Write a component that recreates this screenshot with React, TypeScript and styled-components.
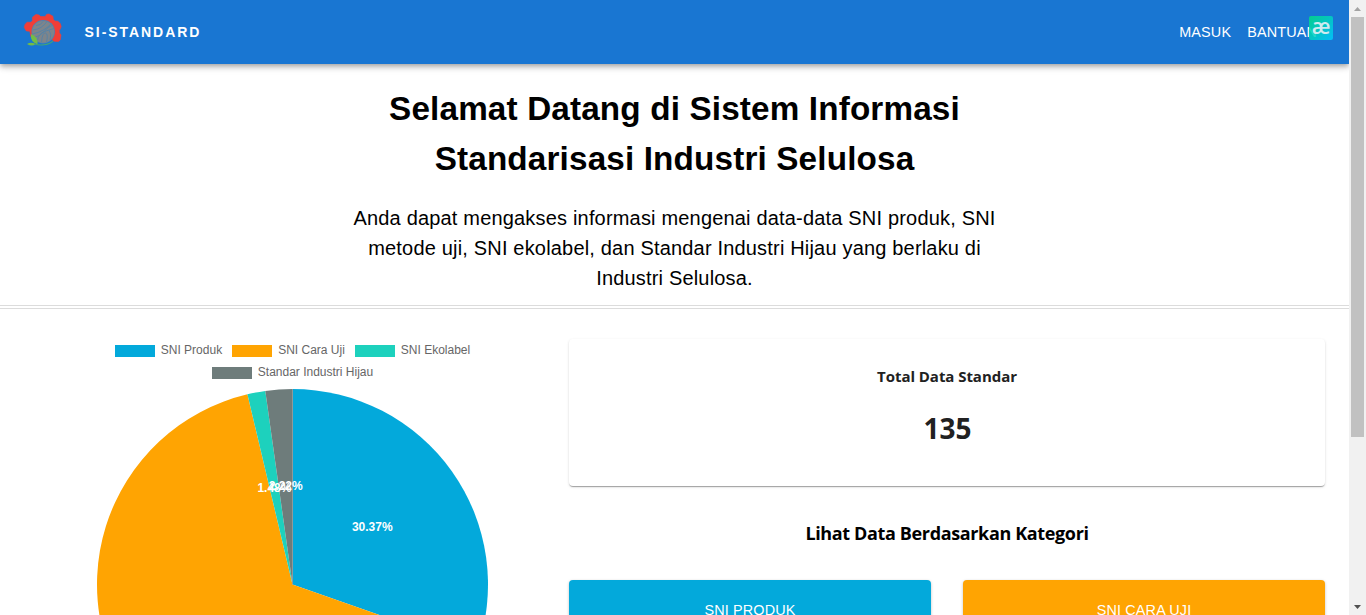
import React from "react";
import styled, { createGlobalStyle } from "styled-components";

const GlobalStyle = createGlobalStyle`
  * { box-sizing: border-box; }
  body { margin: 0; background: #fff; overflow: hidden; }
`;

const sans = `"Liberation Sans", Arial, sans-serif`;
const humanist = `"Open Sans", "Noto Sans", sans-serif`;

const Window = styled.div`
  display: flex;
  width: 1366px;
  height: 615px;
  overflow: hidden;
  font-family: ${sans};
`;

const Page = styled.div`
  width: 1349px;
  height: 615px;
  overflow: hidden;
`;

const AppBar = styled.header`
  position: relative;
  display: flex;
  align-items: center;
  height: 64px;
  padding: 0 32px 0 24px;
  background: #1976d2;
  color: #fff;
  box-shadow: 0 2px 4px -1px rgba(0, 0, 0, 0.2), 0 4px 5px 0 rgba(0, 0, 0, 0.14),
    0 1px 10px 0 rgba(0, 0, 0, 0.12);
`;

const Logo = styled.svg`
  width: 40px;
  height: 36px;
  margin: 0 21.5px 4px -1px;
`;

const Brand = styled.span`
  flex: 1;
  font-size: 14px;
  font-weight: 700;
  letter-spacing: 1.95px;
`;

const NavLink = styled.a`
  margin-left: 16px;
  font-size: 14.4px;
  line-height: 20px;
  letter-spacing: 0.15px;
`;

const Extension = styled.div`
  position: absolute;
  top: 16px;
  right: 16px;
  width: 24px;
  height: 24px;
  border-radius: 2px;
  background: linear-gradient(135deg, rgba(0, 220, 130, 0.86), rgba(0, 200, 255, 0.86));
  color: #cdebf0;
  font: 600 21px/21px ${humanist};
  text-align: center;
`;

const Hero = styled.section`
  display: flex;
  flex-direction: column;
  align-items: center;
  height: 242px;
  padding-top: 20px;
  border-bottom: 1px solid #dcdcdc;
  text-align: center;
`;

const Title = styled.h1`
  width: 660px;
  margin: 0;
  font-size: 33.28px;
  font-weight: 700;
  line-height: 50px;
  letter-spacing: 0.15px;
`;

const Intro = styled.p`
  width: 660px;
  margin: 19px 0 0;
  font-size: 20px;
  line-height: 30px;
  letter-spacing: 0.18px;
`;

const Divider = styled.hr`
  height: 1px;
  margin: 2px 0 0;
  border: 0;
  background: #dcdcdc;
`;

const Content = styled.main`
  display: grid;
  grid-template-columns: 489px 756px;
  column-gap: 32px;
  padding: 30px 24px 0 48px;
`;

const ChartPanel = styled.div`
  display: flex;
  flex-direction: column;
  align-items: center;
`;

const Legend = styled.div`
  display: flex;
  flex-wrap: wrap;
  align-content: flex-start;
  justify-content: center;
  column-gap: 10px;
  width: 391px;
  height: 49px;
`;

const LegendItem = styled.div`
  display: flex;
  align-items: center;
  gap: 6px;
  height: 22px;
  font-size: 12px;
  color: #666;
`;

const Swatch = styled.span<{ $color: string }>`
  width: 40px;
  height: 12px;
  margin-top: 2px;
  background: ${(p) => p.$color};
`;

const Pie = styled.svg`
  display: block;
  width: 392px;
  height: 392px;
  margin-right: 1px;
  flex: none;
  overflow: visible;
`;

const PieLabel = styled.text`
  fill: #fff;
  font: 700 12px ${sans};
  text-anchor: middle;
`;

const Side = styled.div`
  display: flex;
  flex-direction: column;
`;

const Card = styled.section`
  height: 147px;
  border-radius: 4px;
  background: #fff;
  color: #212121;
  text-align: center;
  font-family: ${humanist};
  box-shadow: 0 2px 1px -1px rgba(0, 0, 0, 0.2), 0 1px 1px 0 rgba(0, 0, 0, 0.14),
    0 1px 3px 0 rgba(0, 0, 0, 0.12);
`;

const CardTitle = styled.h2`
  margin: 0;
  padding-top: 25px;
  font-size: 15px;
  font-weight: 700;
  line-height: 24px;
  letter-spacing: -0.05px;
`;

const Total = styled.p`
  margin: 20px 0 0 1px;
  font-size: 28px;
  font-weight: 700;
  line-height: 40px;
`;

const SectionTitle = styled.h2`
  margin: 33px 0 32px;
  font: 700 18px/29px ${humanist};
  letter-spacing: -0.36px;
  text-align: center;
`;

const Categories = styled.div`
  display: grid;
  grid-template-columns: 1fr 1fr;
  gap: 32px;
`;

const Category = styled.div<{ $color: string }>`
  height: 100px;
  padding-top: 20px;
  border-radius: 4px;
  background: ${(p) => p.$color};
  color: #fff;
  font-size: 14.4px;
  line-height: 20px;
  letter-spacing: 0.15px;
  text-align: center;
  box-shadow: 0 1px 3px rgba(0, 0, 0, 0.25);
`;

const Scrollbar = styled.div`
  display: flex;
  flex-direction: column;
  align-items: center;
  justify-content: space-between;
  width: 17px;
  height: 615px;
  background: #f1f1f1;
`;

const ScrollArrow = styled.svg`
  width: 17px;
  height: 17px;
  flex: none;
`;

const Thumb = styled.div`
  width: 13px;
  height: 420px;
  margin-bottom: auto;
  background: #c1c1c1;
`;

const data = [
  { label: "SNI Produk", count: 41, color: "#03a9db" },
  { label: "SNI Cara Uji", count: 89, color: "#ffa402" },
  { label: "SNI Ekolabel", count: 2, color: "#1dd1bd" },
  { label: "Standar Industri Hijau", count: 3, color: "#6e7c7b" },
];
const total = data.reduce((n, d) => n + d.count, 0);
const C = 196.5;
const R = 195.5;

function point(fraction: number, radius: number) {
  const a = fraction * Math.PI * 2;
  return [C + radius * Math.sin(a), C - radius * Math.cos(a)];
}

function PieChart() {
  let start = 0;
  const slices = data.map((d) => {
    const end = start + d.count / total;
    const [x1, y1] = point(start, R);
    const [x2, y2] = point(end, R);
    const [tx, ty] = point((start + end) / 2, R / 2);
    const large = end - start > 0.5 ? 1 : 0;
    start = end;
    return { ...d, tx, ty, path: `M${C} ${C}L${x1} ${y1}A${R} ${R} 0 ${large} 1 ${x2} ${y2}Z` };
  });
  return (
    <Pie viewBox="0 0 392 392">
      {slices.map((s) => (
        <path key={s.label} d={s.path} fill={s.color} />
      ))}
      <path d={`M${C} ${C}V1`} stroke="#8f9a9a" strokeWidth="1" />
      {slices.map((s) => (
        <PieLabel key={s.label} x={s.tx} y={s.ty + 3.2}>
          {((s.count / total) * 100).toFixed(2)}%
        </PieLabel>
      ))}
    </Pie>
  );
}

function BrandLogo() {
  return (
    <Logo viewBox="0 0 40 36">
      <path
        fill="#f03e37"
        stroke="#f03e37"
        strokeWidth="0.6"
        strokeLinejoin="round"
        d="M1.2 15.3 2 12.5 4 10.2 8 10.3 9.4 8.8 9.4 5.2 13 2.4 16 3 17.7 4.6h4.5L23.5 2.4 26 2l3.9 2.2L30.3 7.3 31.8 9 35 9.2 37.2 11.5 38.2 14.5 37.2 17 36.2 18.6 36.4 20.8 38 23 37.2 28 35.5 29.6 31 29.2 20 19.5 8 25 6.8 19.3 3.2 18.9z"
      />
      <circle cx="20.2" cy="19.8" r="11.7" fill="#4f84b0" />
      <circle cx="20.2" cy="19.8" r="10.9" fill="#7e858b" />
      <g fill="none" stroke="#5382a8" strokeWidth="0.9">
        <path d="M10 18q9-1 14-8.500M9.600 22q13-3 19-11M11 25.500q6-1 10-6t9-6.500M14.500 28.500q1-7 7-9t9.500-3M18.500 30q1-10 4-9 3 1 1 9M27 28q2-6-1-10M13 13.500q5 0 7-4" />
      </g>
      <path fill="#73bd45" d="M8 22q7.5 3 6.5 10.2Q7 30 8 22zM4 32q4-2.5 8.5 0Q9 35 4 32z" />
      <path d="M12 32.3q4 1 9 .5 6-.6 9-4" fill="none" stroke="#43a477" strokeWidth="1.1" />
    </Logo>
  );
}

export default function App() {
  return (
    <Window>
      <GlobalStyle />
      <Page>
        <AppBar>
          <BrandLogo />
          <Brand>SI-STANDARD</Brand>
          <NavLink>MASUK</NavLink>
          <NavLink>BANTUAN</NavLink>
          <Extension>æ</Extension>
        </AppBar>
        <Hero>
          <Title>
            Selamat Datang di Sistem Informasi
            <br />
            Standarisasi Industri Selulosa
          </Title>
          <Intro>
            Anda dapat mengakses informasi mengenai data-data SNI produk, SNI
            <br />
            metode uji, SNI ekolabel, dan Standar Industri Hijau yang berlaku di
            <br />
            Industri Selulosa.
          </Intro>
        </Hero>
        <Divider />
        <Content>
          <ChartPanel>
            <Legend>
              {data.map((d) => (
                <LegendItem key={d.label}>
                  <Swatch $color={d.color} />
                  {d.label}
                </LegendItem>
              ))}
            </Legend>
            <PieChart />
          </ChartPanel>
          <Side>
            <Card>
              <CardTitle>Total Data Standar</CardTitle>
              <Total>{total}</Total>
            </Card>
            <SectionTitle>Lihat Data Berdasarkan Kategori</SectionTitle>
            <Categories>
              <Category $color="#03a9db">SNI PRODUK</Category>
              <Category $color="#ffa402">SNI CARA UJI</Category>
            </Categories>
          </Side>
        </Content>
      </Page>
      <Scrollbar>
        <ScrollArrow viewBox="0 0 17 17">
          <path d="M5 11h7L8.5 7z" fill="#a3a3a3" />
        </ScrollArrow>
        <Thumb />
        <ScrollArrow viewBox="0 0 17 17">
          <path d="M5 7h7l-3.5 4z" fill="#505050" />
        </ScrollArrow>
      </Scrollbar>
    </Window>
  );
}
